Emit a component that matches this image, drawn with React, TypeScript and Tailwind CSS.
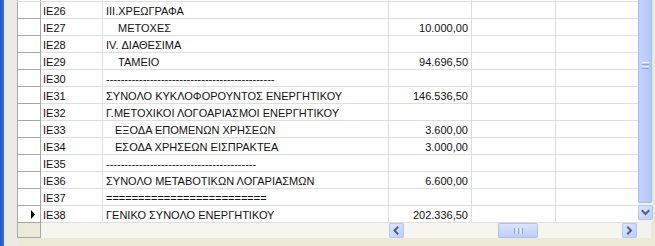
import React from 'react'

type Row = { code: string; desc: string; indent?: number; amount?: string; current?: boolean }

const rows: Row[] = [
  { code: 'IE26', desc: 'III.ΧΡΕΩΓΡΑΦΑ' },
  { code: 'IE27', desc: 'ΜΕΤΟΧΕΣ', indent: 12, amount: '10.000,00' },
  { code: 'IE28', desc: 'IV. ΔΙΑΘΕΣΙΜΑ' },
  { code: 'IE29', desc: 'ΤΑΜΕΙΟ', indent: 12, amount: '94.696,50' },
  { code: 'IE30', desc: '----------------------------------------------' },
  { code: 'IE31', desc: 'ΣΥΝΟΛΟ ΚΥΚΛΟΦΟΡΟΥΝΤΟΣ ΕΝΕΡΓΗΤΙΚΟΥ', amount: '146.536,50' },
  { code: 'IE32', desc: 'Γ.ΜΕΤΟΧΙΚΟΙ ΛΟΓΟΑΡΙΑΣΜΟΙ ΕΝΕΡΓΗΤΙΚΟΥ' },
  { code: 'IE33', desc: 'ΕΞΟΔΑ ΕΠΟΜΕΝΩΝ ΧΡΗΣΕΩΝ', indent: 9, amount: '3.600,00' },
  { code: 'IE34', desc: 'ΕΣΟΔΑ ΧΡΗΣΕΩΝ ΕΙΣΠΡΑΚΤΕΑ', indent: 9, amount: '3.000,00' },
  { code: 'IE35', desc: '-----------------------------------------' },
  { code: 'IE36', desc: 'ΣΥΝΟΛΟ ΜΕΤΑΒΟΤΙΚΩΝ ΛΟΓΑΡΙΑΣΜΩΝ', amount: '6.600,00' },
  { code: 'IE37', desc: '=========================' },
  { code: 'IE38', desc: 'ΓΕΝΙΚΟ ΣΥΝΟΛΟ ΕΝΕΡΓΗΤΙΚΟΥ', amount: '202.336,50', current: true },
]

function Chevron({ dir }: { dir: 'left' | 'right' | 'down' }) {
  const d =
    dir === 'left' ? 'M7.5 3.5 L4.5 6.5 L7.5 9.5' : dir === 'right' ? 'M5 3.5 L8 6.5 L5 9.5' : 'M3.5 5 L6.5 8 L9.5 5'
  return (
    <svg width="13" height="13" viewBox="0 0 13 13">
      <path d={d} fill="none" stroke="#4d6185" strokeWidth="2" strokeLinecap="square" />
    </svg>
  )
}

function ScrollButton({ dir }: { dir: 'left' | 'right' | 'down' }) {
  return (
    <div className="w-[15px] h-[15px] rounded-[2px] border border-[#b3c6f4] bg-gradient-to-br from-[#dde7fd] to-[#bccefa] flex items-center justify-center">
      <Chevron dir={dir} />
    </div>
  )
}

function GridRow({ row }: { row?: Row }) {
  return (
    <div className="flex h-[17px] border-b border-[#dedede]">
      <div className="w-[24px] shrink-0 bg-white border-l border-r border-b border-[#a7a6aa] -mb-px flex items-center justify-end pr-[4px]">
        {row?.current && (
          <svg width="6" height="9" viewBox="0 0 6 9">
            <path d="M1 0 L5 4.5 L1 9 Z" fill="#000" />
          </svg>
        )}
      </div>
      <div className="w-[62px] shrink-0 border-r border-[#dedede] pl-[2px] pt-[2px] flex items-center">{row?.code}</div>
      <div
        className="w-[286px] shrink-0 border-r border-[#dedede] pl-[3px] pt-[2px] flex items-center whitespace-pre overflow-hidden"
      >
        <span style={{ paddingLeft: row?.indent ?? 0 }}>{row?.desc}</span>
      </div>
      <div className="w-[83px] shrink-0 border-r border-[#dedede] pr-[3px] pt-[2px] flex items-center justify-end">
        {row?.amount}
      </div>
      <div className="w-[84px] shrink-0 border-r border-[#dedede]" />
      <div className="flex-1" />
    </div>
  )
}

export default function App() {
  return (
    <div
      className="w-[655px] h-[246px] flex bg-[#ece9d8] overflow-hidden text-[11px] text-[#111]"
      style={{ fontFamily: '"Liberation Sans", Arial, sans-serif' }}
    >
      <div className="w-[4px] shrink-0 bg-gradient-to-r from-[#1d4fc8] to-[#3f74e0]" />
      <div className="w-[13px] shrink-0 bg-[#ebeae4]" />
      <div className="flex-1 flex flex-col">
        <div className="flex h-[223px]">
          {/* grid body */}
          <div className="w-[621px] bg-white flex flex-col overflow-hidden">
            <div className="flex h-[2px] border-b border-[#dedede]">
              <div className="w-[24px] shrink-0 border-l border-r border-[#a7a6aa]" />
              <div className="w-[62px] shrink-0 border-r border-[#dedede]" />
              <div className="w-[286px] shrink-0 border-r border-[#dedede]" />
              <div className="w-[83px] shrink-0 border-r border-[#dedede]" />
              <div className="w-[84px] shrink-0 border-r border-[#dedede]" />
            </div>
            {rows.map((r) => (
              <GridRow key={r.code} row={r} />
            ))}
          </div>
          {/* vertical scrollbar */}
          <div className="w-[14px] flex flex-col bg-[#f3f2ec]">
            <div className="h-[203px] rounded-b-[2px] border-x border-b border-[#a3baf0] bg-gradient-to-r from-[#c4d4fc] to-[#b3c7f8] flex flex-col items-center justify-start pt-[62px] gap-[1px]">
              <div className="w-[7px] h-px bg-[#eef3fe]" />
              <div className="w-[7px] h-px bg-[#8ea6e0]" />
              <div className="w-[7px] h-px bg-[#eef3fe]" />
              <div className="w-[7px] h-px bg-[#8ea6e0]" />
            </div>
            <div className="mt-[2px]">
              <ScrollButton dir="down" />
            </div>
          </div>
          <div className="flex-1" />
        </div>
        {/* horizontal scrollbar row */}
        <div className="flex h-[15px]">
          <div className="w-[24px] shrink-0 bg-[#ece9d8] border-l border-r border-b border-[#a7a6aa]" />
          <div className="w-[348px] shrink-0 bg-[#f6f5ef]" />
          <ScrollButton dir="left" />
          <div className="w-[94px] shrink-0 bg-[#f6f5ef]" />
          <div className="w-[40px] shrink-0 rounded-[2px] border border-[#adc1f3] bg-gradient-to-b from-[#dbe5fd] to-[#bccdf9] flex items-center justify-center gap-[1px]">
            <div className="w-px h-[6px] bg-[#8ea6e0]" />
            <div className="w-px h-[6px] bg-[#eef3fe]" />
            <div className="w-px h-[6px] bg-[#8ea6e0]" />
            <div className="w-px h-[6px] bg-[#eef3fe]" />
            <div className="w-px h-[6px] bg-[#8ea6e0]" />
          </div>
          <div className="w-[84px] shrink-0 bg-[#f6f5ef]" />
          <ScrollButton dir="right" />
          <div className="w-[14px] shrink-0 bg-[#f3f2ec]" />
          <div className="flex-1" />
        </div>
        <div className="flex-1" />
      </div>
    </div>
  )
}
